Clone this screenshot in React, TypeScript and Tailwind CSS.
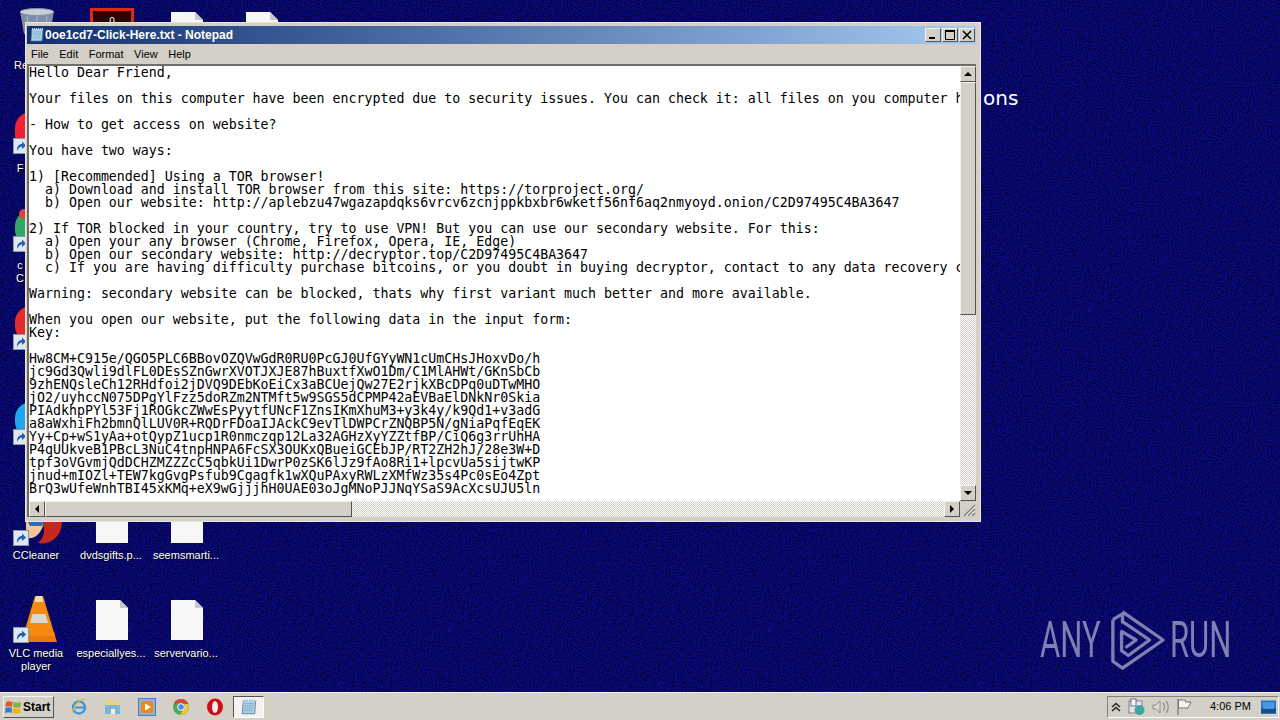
import React from 'react';

const noteLines = [
  'Hello Dear Friend,',
  '',
  'Your files on this computer have been encrypted due to security issues. You can check it: all files on you computer have',
  '',
  '- How to get access on website?',
  '',
  'You have two ways:',
  '',
  '1) [Recommended] Using a TOR browser!',
  '  a) Download and install TOR browser from this site: https://torproject.org/',
  '  b) Open our website: http://aplebzu47wgazapdqks6vrcv6zcnjppkbxbr6wketf56nf6aq2nmyoyd.onion/C2D97495C4BA3647',
  '',
  '2) If TOR blocked in your country, try to use VPN! But you can use our secondary website. For this:',
  '  a) Open your any browser (Chrome, Firefox, Opera, IE, Edge)',
  '  b) Open our secondary website: http://decryptor.top/C2D97495C4BA3647',
  '  c) If you are having difficulty purchase bitcoins, or you doubt in buying decryptor, contact to any data recovery company',
  '',
  'Warning: secondary website can be blocked, thats why first variant much better and more available.',
  '',
  'When you open our website, put the following data in the input form:',
  'Key:',
  '',
  'Hw8CM+C915e/QGO5PLC6BBovOZQVwGdR0RU0PcGJ0UfGYyWN1cUmCHsJHoxvDo/h',
  'jc9Gd3Qwli9dlFL0DEsSZnGwrXVOTJXJE87hBuxtfXwO1Dm/C1MlAHWt/GKnSbCb',
  '9zhENQsleCh12RHdfoi2jDVQ9DEbKoEiCx3aBCUejQw27E2rjkXBcDPq0uDTwMHO',
  'jO2/uyhccN075DPgYlFzz5doRZm2NTMft5w9SGS5dCPMP42aEVBaElDNkNr0Skia',
  'PIAdkhpPYl53Fj1ROGkcZWwEsPyytfUNcF1ZnsIKmXhuM3+y3k4y/k9Qd1+v3adG',
  'a8aWxhiFh2bmnQlLUV0R+RQDrFDoaIJAckC9evTlDWPCrZNQBP5N/gNiaPqfEqEK',
  'Yy+Cp+wS1yAa+otQypZ1ucp1R0nmczqp12La32AGHzXyYZZtfBP/CiQ6g3rrUhHA',
  'P4qUUkveB1PBcL3NuC4tnpHNPA6FcSX3OUKxQBueiGCEbJP/RT2ZH2hJ/28e3W+D',
  'tpf3oVGvmjQdDCHZMZZZcC5qbkUi1DwrP0zSK6lJz9fAo8Ri1+lpcvUa5sijtwKP',
  'jnud+mIOZl+TEW7kgGvgPsfub9Cgagfk1wXQuPAxyRWLzXMfWz35s4Pc0sEo4Zpt',
  'BrQ3wUfeWnhTBI45xKMq+eX9wGjjjhH0UAE03oJgMNoPJJNqYSaS9AcXcsUJU5ln',
];

const raised =
  'border border-t-[#f4f3ef] border-l-[#f4f3ef] border-r-[#55534e] border-b-[#55534e] bg-[#d4d0c8]';

// Small shortcut arrow overlay used on the desktop icons
const ShortcutBadge = ({ className = '' }: { className?: string }) => (
  <svg width="16" height="16" viewBox="0 0 16 16" className={className}>
    <rect x="0.5" y="0.5" width="15" height="15" fill="#dfe6f2" stroke="#8a96aa" />
    <path d="M4 13 C4 8 6 6 9 6 L9 3.5 L13 7.5 L9 11 L9 8.5 C7 8.5 5.5 10 4 13 Z" fill="#1d5fae" />
  </svg>
);

const FileIcon = ({ x, y, h = 40 }: { x: number; y: number; h?: number }) => (
  <svg
    width="32"
    height={h}
    viewBox={`0 0 32 ${h}`}
    className="absolute"
    style={{ left: x, top: y }}
  >
    <path d={`M0 0 H24 L32 8 V${h} H0 Z`} fill="#f7f7f7" />
    <path d="M24 0 L32 8 H24 Z" fill="#c5c9d0" />
  </svg>
);

const DesktopLabel = ({ x, y, w = 76, text }: { x: number; y: number; w?: number; text: string }) => (
  <div
    className="absolute text-center text-[11px] leading-[13px] text-white font-['Liberation_Sans',sans-serif] [text-shadow:1px_1px_1px_#000]"
    style={{ left: x, top: y, width: w }}
  >
    {text}
  </div>
);

const ArrowBtn = ({ dir, className = '' }: { dir: 'up' | 'down' | 'left' | 'right'; className?: string }) => {
  const points = {
    up: '4,10 8,6 12,10',
    down: '4,6 12,6 8,10',
    left: '10,4 10,12 6,8',
    right: '6,4 6,12 10,8',
  }[dir];
  return (
    <div className={`w-4 h-4 shrink-0 ${raised} ${className}`}>
      <svg width="14" height="14" viewBox="1 1 14 14">
        <polygon points={points} fill="#000" />
      </svg>
    </div>
  );
};

const NotepadGlyph = ({ size = 16 }: { size?: number }) => (
  <svg width={size} height={size} viewBox="0 0 16 16">
    <path d="M3 2 H14 L13 14 H2 Z" fill="#a9d0e8" stroke="#5d7f9b" strokeWidth="0.8" />
    <path d="M3 2 H14" stroke="#eef6fb" strokeWidth="1.6" strokeDasharray="1 1" />
    <path d="M4.5 5 H12 M4.3 7 H11.8 M4.1 9 H11.6 M3.9 11 H11.4" stroke="#7fa6c2" strokeWidth="0.7" />
  </svg>
);

const Desktop = () => (
  <div className="absolute inset-0 overflow-hidden bg-[#0b0b8c]">
    <svg width="1280" height="692" className="absolute left-0 top-0">
      <filter id="grain" x="0" y="0" width="100%" height="100%" colorInterpolationFilters="sRGB">
        <feTurbulence type="fractalNoise" baseFrequency="0.8" numOctaves="2" seed="4" />
        <feColorMatrix values="0 0 0 0 0.01  0 0 0 0 0.01  0 0 0 0 0.22  3.4 0 0 0 -1.25" />
      </filter>
      <rect width="1280" height="692" filter="url(#grain)" />
    </svg>

    {/* recycle bin, mostly hidden */}
    <svg width="36" height="26" viewBox="0 0 36 26" className="absolute left-[19px] top-[8px]">
      <path d="M1 3 L35 3 L31 26 L5 26 Z" fill="#7f8ea6" />
      <ellipse cx="18" cy="4" rx="17" ry="3.5" fill="#c8ced8" stroke="#8090a6" />
      <path d="M8 8 L10 26 M18 8 V26 M28 8 L26 26" stroke="#a9b4c4" />
    </svg>
    <div className="absolute left-[90px] top-[8px] w-[44px] h-[20px] bg-[#2a0404] border-[3px] border-[#e02a10] text-center text-[10px] leading-[22px] text-white font-['Liberation_Sans',sans-serif]">
      0
    </div>
    <FileIcon x={171} y={12} h={12} />
    <FileIcon x={246} y={12} h={12} />
    <DesktopLabel x={9} y={59} w={24} text="Re" />

    {/* icons behind the window, only their left edge shows */}
    <div className="absolute left-[15px] top-[112px] w-[16px] h-[40px] rounded-l-full bg-[#ee2233]" />
    <ShortcutBadge className="absolute left-[13px] top-[138px]" />
    <DesktopLabel x={14} y={162} w={12} text="F" />
    <div className="absolute left-[15px] top-[210px] w-[16px] h-[36px] rounded-l-full bg-[#2fa866]" />
    <div className="absolute left-[19px] top-[209px] w-[8px] h-[10px] rounded-l-full bg-[#d8433a]" />
    <ShortcutBadge className="absolute left-[13px] top-[236px]" />
    <DesktopLabel x={14} y={259} w={12} text="c" />
    <DesktopLabel x={14} y={272} w={12} text="C" />
    <div className="absolute left-[15px] top-[306px] w-[16px] h-[36px] rounded-l-full bg-[#e42c2c]" />
    <ShortcutBadge className="absolute left-[13px] top-[334px]" />
    <div className="absolute left-[15px] top-[402px] w-[16px] h-[36px] rounded-l-full bg-[#1ea6ee]" />
    <ShortcutBadge className="absolute left-[13px] top-[429px]" />

    {/* CCleaner */}
    <svg width="50" height="26" viewBox="0 0 50 26" className="absolute left-[14px] top-[522px]">
      <path d="M12 0 H30 C28 10 22 18 12 16 Z" fill="#f3c79b" />
      <path d="M28 0 H48 C48 14 36 24 24 21 C30 16 32 8 28 0 Z" fill="#c8261f" />
      <path d="M14 0 H30 L28 4 H16 Z" fill="#2a70b8" />
    </svg>
    <ShortcutBadge className="absolute left-[13px] top-[530px]" />
    <DesktopLabel x={-2} y={549} text="CCleaner" />
    <div className="absolute left-[96px] top-[522px] w-[32px] h-[21px] bg-[#f7f7f7]" />
    <div className="absolute left-[171px] top-[522px] w-[32px] h-[21px] bg-[#f7f7f7]" />
    <DesktopLabel x={73} y={549} text="dvdsgifts.p..." />
    <DesktopLabel x={148} y={549} text="seemsmarti..." />

    {/* VLC */}
    <svg width="36" height="46" viewBox="0 0 36 46" className="absolute left-[21px] top-[596px]">
      <path d="M0 46 L3 36 H33 L36 46 Z" fill="#e87a0c" />
      <path d="M14 0 H22 L34 40 H2 Z" fill="#f58a10" />
      <path d="M11.5 18 H24.5 L27 27 H9 Z" fill="#d8d8d2" />
      <path d="M15 0 H21 L22.5 6 H13.5 Z" fill="#f7d9b0" />
    </svg>
    <ShortcutBadge className="absolute left-[13px] top-[627px]" />
    <DesktopLabel x={-2} y={647} text="VLC media player" />
    <FileIcon x={96} y={600} />
    <FileIcon x={171} y={600} />
    <DesktopLabel x={73} y={647} text="especiallyes..." />
    <DesktopLabel x={148} y={647} text="servervario..." />

    <div className="absolute left-[983px] top-[86px] text-[20px] leading-[24px] text-white font-['DejaVu_Sans',sans-serif]">
      ons
    </div>

    {/* watermark */}
    <div className="absolute left-[1040px] top-[609px] flex items-center h-[62px] text-[#7f7fb4] font-['Roboto',sans-serif] font-normal text-[50px] leading-[62px]">
      <span className="w-[60px] inline-block origin-left scale-x-[0.62] whitespace-nowrap">ANY</span>
      <svg width="58" height="62" viewBox="0 0 60 62" className="ml-[9px]">
        <g fill="none" stroke="#7f7fb4" strokeWidth="3.4" strokeLinejoin="round">
          <path d="M14 2 L56 31 L14 60 L4 53 V10" />
          <path d="M4 10 L14 4 V14 M14 12 L42 31 L20 47 L13 42 V22 L28 31 L17 39" />
        </g>
      </svg>
      <span className="w-[60px] ml-[3px] inline-block origin-left scale-x-[0.62] whitespace-nowrap">RUN</span>
    </div>
  </div>
);

const NotepadWindow = () => (
  <div className="absolute left-[25px] top-[22px] w-[956px] h-[500px] flex flex-col bg-[#d4d0c8] border border-[#e8e6df] pl-[1px] pr-[4px] pt-[3px] pb-[4px]">
    {/* Title bar */}
    <div className="h-[18px] shrink-0 flex items-center bg-gradient-to-r from-[#123071] to-[#a6caf0] pl-[2px] pr-[1px]">
      <NotepadGlyph />
      <span className="text-[12px] font-bold text-white font-['Liberation_Sans',sans-serif] whitespace-nowrap">
        0oe1cd7-Click-Here.txt - Notepad
      </span>
      <div className={`ml-auto w-4 h-[14px] relative ${raised}`}>
        <div className="absolute left-[3px] bottom-[2px] w-[6px] h-[2px] bg-black" />
      </div>
      <div className={`ml-[1px] w-4 h-[14px] relative ${raised}`}>
        <div className="absolute left-[2px] top-[1px] w-[10px] h-[10px] border border-black border-t-2" />
      </div>
      <div className={`ml-[1px] w-4 h-[14px] flex items-center justify-center ${raised}`}>
        <svg width="10" height="10" viewBox="0 0 10 10">
          <path d="M1 1 L9 9 M9 1 L1 9" stroke="#000" strokeWidth="1.6" />
        </svg>
      </div>
    </div>

    {/* Menu */}
    <div className="h-[20px] shrink-0 flex items-center gap-[10.5px] pl-[4px] text-[11px] text-black font-['Liberation_Sans',sans-serif]">
      <span>File</span>
      <span>Edit</span>
      <span>Format</span>
      <span>View</span>
      <span>Help</span>
    </div>

    {/* Client area */}
    <div className="flex-1 min-h-0 flex flex-col border-t-2 border-l-2 border-t-[#6f6d67] border-l-[#6f6d67]">
      <div className="flex-1 min-h-0 flex">
        <div className="flex-1 min-w-0 overflow-hidden bg-white font-['DejaVu_Sans_Mono',monospace] text-[13.28px] leading-[13px] text-black whitespace-pre">
          {noteLines.map((line, i) => (
            <div key={i} className="h-[13px]">
              {line}
            </div>
          ))}
        </div>
        <div className="w-4 shrink-0 flex flex-col bg-[repeating-conic-gradient(#d4d0c8_0_25%,#ffffff_0_50%)] bg-[length:2px_2px]">
          <ArrowBtn dir="up" />
          <div className={`h-[233px] ${raised}`} />
          <div className="flex-1" />
          <ArrowBtn dir="down" />
        </div>
      </div>
      <div className="h-4 shrink-0 flex">
        <div className="flex-1 flex bg-[repeating-conic-gradient(#d4d0c8_0_25%,#ffffff_0_50%)] bg-[length:2px_2px]">
          <ArrowBtn dir="left" />
          <div className={`w-[307px] ${raised}`} />
          <div className="flex-1" />
          <ArrowBtn dir="right" />
        </div>
        <div className="w-4 shrink-0 flex items-end justify-end bg-[#d4d0c8]">
          <svg width="14" height="14" viewBox="0 0 14 14">
            <path d="M13 2 L2 13 M13 6 L6 13 M13 10 L10 13" stroke="#85827a" strokeWidth="1.4" />
            <path d="M13 4 L4 13 M13 8 L8 13" stroke="#ffffff" strokeWidth="0.8" />
          </svg>
        </div>
      </div>
    </div>
  </div>
);

const Taskbar = () => (
  <div className="h-[28px] shrink-0 flex items-center bg-[#d4d0c8] border-t border-[#f4f3ef] pl-[3px] pr-[1px] font-['Liberation_Sans',sans-serif]">
    <div className={`w-[51px] h-[22px] flex items-center gap-[1px] pl-[1px] ${raised}`}>
      <svg width="17" height="16" viewBox="0 0 17 16">
        <path d="M1 3 C3 2 5 2 7.5 3 L7 8 C5 7 3 7 0.5 8 Z" fill="#e4572e" />
        <path d="M8.5 3 C11 4 13 4 16 3 L15.5 8 C13 9 11 9 8 8 Z" fill="#7cb342" />
        <path d="M0.5 9 C3 8 5 8 7 9 L6.5 14 C4 13 2 13 0 14 Z" fill="#2f7fd0" />
        <path d="M8 9 C10 10 13 10 15.5 9 L15 14 C12 15 10 15 7.5 14 Z" fill="#f4b400" />
      </svg>
      <span className="text-[12px] font-bold text-black">Start</span>
    </div>

    <div className="ml-[16px] flex items-center gap-[16px]">
      {/* IE */}
      <svg width="18" height="18" viewBox="0 0 18 18">
        <circle cx="9" cy="9.5" r="6" fill="none" stroke="#3a97dc" strokeWidth="2.4" />
        <path d="M4 9.5 H14" stroke="#3a97dc" strokeWidth="2" />
        <path d="M2 15 C6 3 12 0 16 2" fill="none" stroke="#e5b93c" strokeWidth="1.3" />
      </svg>
      {/* Explorer */}
      <svg width="18" height="18" viewBox="0 0 18 18">
        <path d="M2 2 H8 L9 4 H15 V16 H2 Z" fill="#efd27a" />
        <path d="M1 7 H16 V16 H1 Z" fill="#7ab6d8" />
        <rect x="7" y="11" width="4" height="5" fill="#f3f3e8" />
      </svg>
      {/* Media player */}
      <svg width="18" height="18" viewBox="0 0 18 18">
        <rect x="0.5" y="0.5" width="17" height="17" fill="#8ab2d8" stroke="#4c7eb0" />
        <rect x="3" y="3" width="12" height="12" rx="2" fill="#ee8a1c" />
        <path d="M7 5.5 L13 9 L7 12.5 Z" fill="#fff" />
      </svg>
      {/* Chrome */}
      <svg width="18" height="18" viewBox="0 0 18 18">
        <circle cx="9" cy="9" r="8" fill="#4aa858" />
        <path d="M9 1 A8 8 0 0 1 16.2 6 H9 A3 3 0 0 0 3.6 7.5 L2.6 4 A8 8 0 0 1 9 1 Z" fill="#d8453a" />
        <path d="M16.2 6 A8 8 0 0 1 8 17 L11.5 11 A3 3 0 0 0 12 6 Z" fill="#f0c43a" />
        <circle cx="9" cy="9" r="3.4" fill="#4a8de0" stroke="#fff" />
      </svg>
      {/* Opera */}
      <svg width="18" height="18" viewBox="0 0 18 18">
        <ellipse cx="9" cy="9" rx="8" ry="8.4" fill="#cc0f16" />
        <ellipse cx="9" cy="9" rx="3" ry="6" fill="#fbeaea" />
      </svg>
    </div>

    {/* Active notepad button */}
    <div className="ml-[9px] w-[31px] h-[22px] flex items-center justify-center bg-[#f4f3ef] border border-t-[#55534e] border-l-[#55534e] border-r-white border-b-white">
      <NotepadGlyph size={18} />
    </div>

    {/* Tray */}
    <div className="ml-auto w-[172px] h-[22px] flex items-center border border-t-[#85827a] border-l-[#85827a] border-r-white border-b-white text-[11px] text-black">
      <svg width="10" height="10" viewBox="0 0 10 10" className="ml-[3px]">
        <path d="M1 5 L5 1.5 L9 5 M1 9 L5 5.5 L9 9" fill="none" stroke="#222" strokeWidth="1.5" />
      </svg>
      <svg width="18" height="18" viewBox="0 0 18 18" className="ml-[7px]">
        <rect x="1" y="3" width="13" height="12" fill="#e4e8ec" stroke="#667" strokeWidth="0.8" />
        <rect x="3" y="1" width="5" height="7" fill="#f6f6f6" stroke="#556" strokeWidth="0.8" />
        <circle cx="11.5" cy="12" r="5" fill="#3aa6a0" />
      </svg>
      <svg width="18" height="16" viewBox="0 0 18 16" className="ml-[6px]">
        <path d="M1 6 H4 L8 2 V14 L4 10 H1 Z" fill="#dcdcd8" stroke="#8c8c88" />
        <path d="M11 4 C13 6 13 10 11 12 M14 2 C17 5 17 11 14 14" fill="none" stroke="#8c8c88" strokeWidth="1.2" />
      </svg>
      <svg width="16" height="18" viewBox="0 0 16 18" className="ml-[6px]">
        <path d="M2 1 V17" stroke="#77756f" strokeWidth="1.2" />
        <path d="M2.5 2 H9 L9.5 4 H15 L12 10 H2.5 Z" fill="#f4f3ef" stroke="#77756f" />
      </svg>
      <span className="ml-[18px] whitespace-nowrap">4:06 PM</span>
      <svg width="15" height="14" viewBox="0 0 16 14" className="ml-auto mr-[2px]">
        <rect width="16" height="14" fill="#2a78c4" />
        <rect y="8" width="16" height="6" fill="#14508e" />
        <rect x="2" y="2" width="12" height="7" fill="#4a9ae0" />
      </svg>
    </div>
  </div>
);

const App: React.FC = () => {
  return (
    <div className="w-[1280px] h-[720px] flex flex-col overflow-hidden">
      <div className="relative flex-1">
        <Desktop />
        <NotepadWindow />
      </div>
      <Taskbar />
    </div>
  );
};

export default App;
